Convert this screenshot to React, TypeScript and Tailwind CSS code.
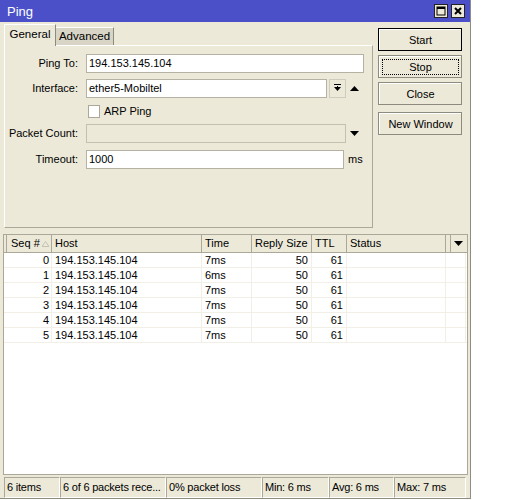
import React from "react";

const rows = [
  { seq: 0, time: "7ms" },
  { seq: 1, time: "6ms" },
  { seq: 2, time: "7ms" },
  { seq: 3, time: "7ms" },
  { seq: 4, time: "7ms" },
  { seq: 5, time: "7ms" },
];

function Btn({ label, primary, focus }: { label: string; primary?: boolean; focus?: boolean }) {
  return (
    <div
      className={
        "flex h-[23px] w-[84px] items-center justify-center border bg-[#ece9d8] " +
        (primary ? "border-black" : "border-[#8d8a7e]")
      }
    >
      <div
        className={
          "flex h-full w-full items-center justify-center border-t border-l border-t-white border-l-white " +
          (focus ? "p-[2px]" : "")
        }
      >
        {focus ? (
          <div className="flex h-full w-full items-center justify-center border border-dotted border-black">
            {label}
          </div>
        ) : (
          label
        )}
      </div>
    </div>
  );
}

function Triangle({ up }: { up?: boolean }) {
  return (
    <svg width="9" height="6" viewBox="0 0 9 6" className="shrink-0">
      {up ? <polygon points="0,5 9,5 4.5,0" fill="#000" /> : <polygon points="0,0 9,0 4.5,5" fill="#000" />}
    </svg>
  );
}

export default function App() {
  return (
    <div className="h-[500px] w-[512px] bg-white font-['Liberation_Sans',Arial,sans-serif] text-[11px] leading-none text-black">
      <div className="flex h-[499px] w-[471px] flex-col border-r border-b border-[#8f8c80] bg-[#ece9d8]">
        {/* title bar */}
        <div className="flex h-[22px] shrink-0 items-center bg-[#4b50c9] pl-[7px] pr-[5px]">
          <span className="text-[13px] text-white">Ping</span>
          <div className="ml-auto flex gap-[3px]">
            <div className="flex h-[14px] w-[14px] items-center justify-center border border-[#222] bg-[#ece9d8]">
              <svg width="10" height="10" viewBox="0 0 10 10">
                <rect x="1" y="1" width="8" height="8" fill="none" stroke="#000" strokeWidth="1" />
                <rect x="1" y="1" width="8" height="2" fill="#000" />
              </svg>
            </div>
            <div className="flex h-[14px] w-[14px] items-center justify-center border border-[#222] bg-[#ece9d8]">
              <svg width="10" height="10" viewBox="0 0 10 10">
                <path d="M2 2 L8 8 M8 2 L2 8" stroke="#000" strokeWidth="2" />
              </svg>
            </div>
          </div>
        </div>

        {/* top section */}
        <div className="flex h-[206px] shrink-0">
          <div className="ml-[4px] flex w-[369px] flex-col">
            <div className="relative z-10 flex h-[23px] items-end">
              <div className="-mb-px flex h-[22px] w-[52px] items-center justify-center border-t border-l border-r border-t-white border-l-white border-r-[#8d8a7e] bg-[#ece9d8] pb-[1px] text-[11.5px]">
                General
              </div>
              <div className="flex h-[18px] w-[58px] items-center justify-center border-t border-r border-t-white border-r-[#8d8a7e] bg-[#d8d5c6] text-[11.5px]">
                Advanced
              </div>
            </div>
            <div className="flex flex-1 flex-col border-t border-l border-r border-b border-t-white border-l-white border-r-[#aca899] border-b-[#aca899] pt-[8px]">
              <div className="flex h-[19px] items-center">
                <span className="w-[73px] text-right">Ping To:</span>
                <div className="ml-[8px] flex h-[19px] w-[278px] items-center border border-[#b5b2a4] bg-white pl-[2px]">
                  194.153.145.104
                </div>
              </div>
              <div className="mt-[6px] flex h-[19px] items-center">
                <span className="w-[73px] text-right">Interface:</span>
                <div className="ml-[8px] flex h-[19px] w-[241px] items-center border border-[#b5b2a4] bg-white pl-[2px]">
                  ether5-Mobiltel
                </div>
                <div className="ml-[2px] flex h-[19px] w-[17px] items-center justify-center border border-[#cfccbf] bg-[#ece9d8]">
                  <svg width="9" height="9" viewBox="0 0 9 9">
                    <rect x="1" y="0" width="7" height="1" fill="#000" />
                    <polygon points="1,3 8,3 4.5,7" fill="#000" />
                    <rect x="4" y="2" width="1" height="2" fill="#000" />
                  </svg>
                </div>
                <div className="ml-[4px]">
                  <Triangle up />
                </div>
              </div>
              <div className="mt-[7px] flex h-[13px] items-center">
                <div className="ml-[83px] h-[13px] w-[12px] border border-[#aca899] bg-white" />
                <span className="ml-[4px]">ARP Ping</span>
              </div>
              <div className="mt-[6px] flex h-[19px] items-center">
                <span className="w-[73px] text-right">Packet Count:</span>
                <div className="ml-[8px] h-[19px] w-[260px] border border-[#c3c0b2] bg-[#ece9d8]" />
                <div className="ml-[4px]">
                  <Triangle />
                </div>
              </div>
              <div className="mt-[7px] flex h-[19px] items-center">
                <span className="w-[73px] text-right">Timeout:</span>
                <div className="ml-[8px] flex h-[19px] w-[258px] items-center border border-[#b5b2a4] bg-white pl-[2px]">
                  1000
                </div>
                <span className="ml-[4px]">ms</span>
              </div>
            </div>
          </div>
          <div className="ml-[5px] flex flex-col pt-[6px]">
            <Btn label="Start" primary />
            <div className="mt-[4px]">
              <Btn label="Stop" focus />
            </div>
            <div className="mt-[4px]">
              <Btn label="Close" />
            </div>
            <div className="mt-[7px]">
              <Btn label="New Window" />
            </div>
          </div>
        </div>

        {/* table */}
        <div className="mt-[6px] ml-[3px] flex h-[241px] w-[465px] shrink-0 flex-col border border-[#aca899] bg-white">
          <div className="flex h-[18px] shrink-0 border-b border-[#aca899] bg-[#ece9d8]">
            <div className="w-[3px] border-r border-[#aca899]" />
            <div className="flex w-[45px] items-center border-r border-[#aca899] pl-[4px]">
              Seq #
              <svg width="7" height="6" viewBox="0 0 7 6" className="ml-[2px]">
                <polygon points="0,5.5 7,5.5 3.5,0.5" fill="none" stroke="#c4c1b2" />
              </svg>
            </div>
            <div className="flex w-[150px] items-center border-r border-[#aca899] pl-[3px]">Host</div>
            <div className="flex w-[50px] items-center border-r border-[#aca899] pl-[3px]">Time</div>
            <div className="flex w-[60px] items-center border-r border-[#aca899] pl-[3px]">Reply Size</div>
            <div className="flex w-[35px] items-center border-r border-[#aca899] pl-[3px]">TTL</div>
            <div className="flex w-[99px] items-center border-r border-[#aca899] pl-[3px]">Status</div>
            <div className="w-[5px] border-r border-[#aca899]" />
            <div className="flex w-[15px] items-center justify-center">
              <Triangle />
            </div>
          </div>
          {rows.map((r) => (
            <div key={r.seq} className="flex h-[15px] shrink-0 border-b border-[#f1efe6]">
              <div className="w-[3px]" />
              <div className="flex w-[45px] items-center justify-end border-r border-[#f1efe6] pr-[2px]">{r.seq}</div>
              <div className="flex w-[150px] items-center border-r border-[#f1efe6] pl-[3px]">194.153.145.104</div>
              <div className="flex w-[50px] items-center border-r border-[#f1efe6] pl-[3px]">{r.time}</div>
              <div className="flex w-[60px] items-center justify-end border-r border-[#f1efe6] pr-[3px]">50</div>
              <div className="flex w-[35px] items-center justify-end border-r border-[#f1efe6] pr-[3px]">61</div>
              <div className="w-[99px] border-r border-[#f1efe6]" />
              <div className="w-[20px] border-r border-[#f1efe6]" />
            </div>
          ))}
        </div>

        {/* status bar */}
        <div className="mt-[2px] ml-[4px] flex h-[21px] shrink-0">
          {[
            ["6 items", "w-[56px]"],
            ["6 of 6 packets rece...", "w-[106px]"],
            ["0% packet loss", "w-[96px]"],
            ["Min: 6 ms", "w-[67px]"],
            ["Avg: 6 ms", "w-[65px]"],
            ["Max: 7 ms", "w-[72px]"],
          ].map(([t, w]) => (
            <div
              key={t}
              className={
                w +
                " flex items-center whitespace-nowrap border-t border-l border-b border-r border-t-[#aca899] border-l-[#aca899] border-b-white border-r-white pl-[2px] tracking-[-0.2px]"
              }
            >
              {t}
            </div>
          ))}
        </div>
      </div>
    </div>
  );
}
